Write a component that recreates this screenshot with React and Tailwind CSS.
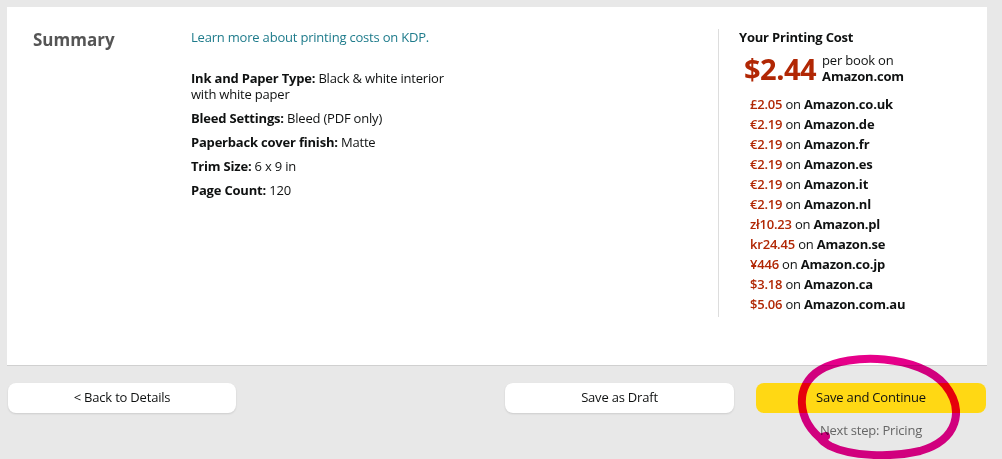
import React from 'react';

const markets = [
  ['£2.05', 'Amazon.co.uk'],
  ['€2.19', 'Amazon.de'],
  ['€2.19', 'Amazon.fr'],
  ['€2.19', 'Amazon.es'],
  ['€2.19', 'Amazon.it'],
  ['€2.19', 'Amazon.nl'],
  ['zł10.23', 'Amazon.pl'],
  ['kr24.45', 'Amazon.se'],
  ['¥446', 'Amazon.co.jp'],
  ['$3.18', 'Amazon.ca'],
  ['$5.06', 'Amazon.com.au'],
];

const specs = [
  ['Ink and Paper Type:', 'Black & white interior with white paper'],
  ['Bleed Settings:', 'Bleed (PDF only)'],
  ['Paperback cover finish:', 'Matte'],
  ['Trim Size:', '6 x 9 in'],
  ['Page Count:', '120'],
];

export default function App() {
  return (
    <div
      className="relative isolate w-[1002px] h-[459px] bg-[#e8e8e8] overflow-hidden text-[#0f1111]"
      style={{ fontFamily: '"Open Sans", "Noto Sans", sans-serif' }}
    >
      {/* white summary panel */}
      <div className="ml-[7px] mr-[15px] mt-[7px] h-[359px] bg-white border-b border-[#d0d0d0] flex">
        <div className="w-[184px] pl-[26px] pt-[21px]">
          <h2 className="text-[17px] font-bold text-[#555555] leading-[24px]">Summary</h2>
        </div>

        <div className="w-[527px] pt-[17px]">
          <a className="text-[13px] leading-[18px] text-[#1e7b8b] tracking-[-0.2px]">
            Learn more about printing costs on KDP.
          </a>
          <div className="mt-[22px] flex flex-col gap-[8px] text-[13px] leading-[16px] tracking-[-0.2px]">
            {specs.map(([k, v]) => (
              <p key={k} className="max-w-[260px]">
                <span className="font-bold">{k}</span> {v}
              </p>
            ))}
          </div>
        </div>

        <div className="mt-[22px] mb-[48px] border-l border-[#dddddd] pl-[20px]">
          <div className="text-[13px] font-bold leading-[16px] tracking-[-0.2px]">Your Printing Cost</div>
          <div className="flex items-start mt-[7px] pl-[5px]">
            <span className="text-[29px] font-bold leading-[34px] text-[#b12704] tracking-[-0.5px]">$2.44</span>
            <div className="ml-[6px] text-[13px] leading-[16px] tracking-[-0.2px]">
              <div>per book on</div>
              <div className="font-bold">Amazon.com</div>
            </div>
          </div>
          <ul className="mt-[8px] pl-[11px] flex flex-col text-[13px] leading-[20px] tracking-[-0.2px]">
            {markets.map(([p, m]) => (
              <li key={m}>
                <span className="text-[#b12704] font-semibold">{p}</span> on <span className="font-bold">{m}</span>
              </li>
            ))}
          </ul>
        </div>
      </div>

      {/* footer buttons */}
      <div className="flex items-start mt-[17px] pl-[8px] pr-[16px] text-[13px] tracking-[-0.2px]">
        <button className="w-[228px] h-[30px] bg-white rounded-[8px] shadow-[0_1px_2px_rgba(0,0,0,0.12)]">
          &lt; Back to Details
        </button>
        <div className="flex-1" />
        <button className="w-[229px] h-[30px] bg-white rounded-[8px] shadow-[0_1px_2px_rgba(0,0,0,0.12)]">
          Save as Draft
        </button>
        <div className="w-[22px]" />
        <div className="w-[230px] flex flex-col items-center">
          <button className="w-full h-[30px] bg-[#ffd814] rounded-[8px]">Save and Continue</button>
          <div className="mt-[8px] text-[#666666] text-[13px]">Next step: Pricing</div>
        </div>
      </div>

      {/* hand-drawn annotation */}
      <svg className="absolute left-[780px] top-[350px] mix-blend-multiply" width="200" height="109" viewBox="0 0 200 109" fill="none">
        <path
          d="M45 92 C 15 70, 15 35, 40 20 C 70 2, 140 5, 165 35 C 185 60, 178 90, 140 101 C 110 108, 70 106, 50 96 C 40 90, 38 88, 46 86"
          stroke="#e6008a"
          strokeWidth="8"
          strokeLinecap="round"
          strokeLinejoin="round"
        />
      </svg>
    </div>
  );
}
